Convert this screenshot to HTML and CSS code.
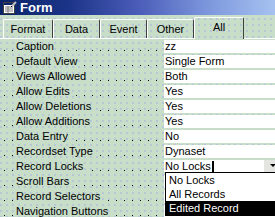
FILE: index.html
```html
<!DOCTYPE html>
<html lang="en">
<head>
    <meta charset="UTF-8">
    <title>Form Properties</title>
    <link rel="stylesheet" href="styles.css">
</head>
<body>
    <div class="titlebar">
        <svg class="app-icon" width="14" height="13" viewBox="0 0 14 13">
            <rect x="0.5" y="1.5" width="11" height="11" fill="#fff" stroke="#404040"/>
            <rect x="1" y="2" width="10" height="2" fill="#0a246a"/>
            <path d="M2 6h8M2 8h8M2 10h8M5 5v7" stroke="#808080" stroke-width="1"/>
            <path d="M9 5l4-4" stroke="#c0c0c0" stroke-width="2"/>
            <path d="M8 6l1-1" stroke="#000" stroke-width="1"/>
        </svg>
        <span class="title">Form</span>
    </div>
    <div class="tabs">
        <div class="tab tab-first">Format</div>
        <div class="tab">Data</div>
        <div class="tab">Event</div>
        <div class="tab">Other</div>
        <div class="tab tab-active">All</div>
    </div>
    <div class="props">
        <div class="prop"><div class="prop-name"><span>Caption</span></div><div class="prop-value">zz</div></div>
        <div class="prop"><div class="prop-name"><span>Default View</span></div><div class="prop-value">Single Form</div></div>
        <div class="prop"><div class="prop-name"><span>Views Allowed</span></div><div class="prop-value">Both</div></div>
        <div class="prop"><div class="prop-name"><span>Allow Edits</span></div><div class="prop-value">Yes</div></div>
        <div class="prop"><div class="prop-name"><span>Allow Deletions</span></div><div class="prop-value">Yes</div></div>
        <div class="prop"><div class="prop-name"><span>Allow Additions</span></div><div class="prop-value">Yes</div></div>
        <div class="prop"><div class="prop-name"><span>Data Entry</span></div><div class="prop-value">No</div></div>
        <div class="prop"><div class="prop-name"><span>Recordset Type</span></div><div class="prop-value">Dynaset</div></div>
        <div class="prop prop-open">
            <div class="prop-name"><span>Record Locks</span></div>
            <div class="prop-value prop-combo">No Locks<span class="caret"></span>
                <div class="drop-btn"><span class="drop-arrow"></span></div>
                <div class="drop-list">
                    <div class="drop-item">No Locks</div>
                    <div class="drop-item">All Records</div>
                    <div class="drop-item drop-selected">Edited Record</div>
                </div>
            </div>
        </div>
        <!-- values of these rows sit under the open list -->
        <div class="prop"><div class="prop-name"><span>Scroll Bars</span></div><div class="prop-value"></div></div>
        <div class="prop"><div class="prop-name"><span>Record Selectors</span></div><div class="prop-value"></div></div>
        <div class="prop"><div class="prop-name"><span>Navigation Buttons</span></div><div class="prop-value"></div></div>
    </div>
</body>
</html>
```

FILE: styles.css
```css
body {
    margin: 0;
    width: 275px;
    height: 217px;
    overflow: hidden;
    font-family: "Liberation Sans", Arial, sans-serif;
    font-size: 11px;
    color: #000;
    background-color: #c8dec8;
    background-image: radial-gradient(circle at 1px 1px, #b6c6d6 0.7px, transparent 0.9px);
    background-size: 6px 6px;
    background-attachment: fixed;
}
.titlebar {
    height: 15px;
    display: flex;
    align-items: center;
    padding-left: 3px;
    background: linear-gradient(90deg, #0a246a 0%, #1c3488 25%, #4a5cb8 50%, #7c96dc 75%, #a6c2f0 100%);
    color: #fff;
}
.app-icon {
    margin-right: 3px;
}
.title {
    font-weight: bold;
    font-size: 13px;
}
.tabs {
    display: flex;
    align-items: flex-end;
    height: 23px;
    padding-left: 3px;
    border-bottom: 1px solid #fff;
}
.tab {
    box-sizing: border-box;
    width: 47px;
    height: 19px;
    border-left: 1px solid #fff;
    border-top: 1px solid #fff;
    border-right: 1px solid #404040;
    border-radius: 2px 2px 0 0;
    text-align: center;
    line-height: 19px;
}
.tab-first {
    width: 50px;
}
.tab-active {
    width: 50px;
    height: 22px;
    margin-bottom: -1px;
    line-height: 19px;
    background-color: #c8dec8;
    background-image: radial-gradient(circle at 1px 1px, #b6c6d6 0.7px, transparent 0.9px);
    background-size: 6px 6px;
    background-attachment: fixed;
}
.props {
    padding-top: 1px;
}
.prop {
    display: grid;
    grid-template-columns: 164px 1fr;
    height: 15px;
}
.prop-name {
    height: 13px;
    padding-left: 16px;
    line-height: 13px;
    background-image: repeating-linear-gradient(90deg, #000 0 1px, transparent 1px 8px);
    background-size: 154px 1px;
    background-position: 4px 10px;
    background-repeat: no-repeat;
}
.prop-name span {
    display: inline-block;
    height: 13px;
    padding-right: 3px;
    background-color: #c8dec8;
    background-image: radial-gradient(circle at 1px 1px, #b6c6d6 0.7px, transparent 0.9px);
    background-size: 6px 6px;
    background-attachment: fixed;
}
.prop-value {
    height: 13px;
    line-height: 13px;
    padding-left: 1px;
    background: #fff;
    white-space: nowrap;
}
.prop-combo {
    position: relative;
    z-index: 1;
    height: 12px;
}
.caret {
    display: inline-block;
    width: 2px;
    height: 11px;
    margin-left: 1px;
    vertical-align: -2px;
    background: #000;
}
.drop-btn {
    position: absolute;
    left: 99px;
    top: 0;
    width: 16px;
    height: 12px;
    background: #e4e4e0;
    border-left: 1px solid #fff;
}
.drop-arrow {
    position: absolute;
    left: 6px;
    top: 4px;
    border-left: 3px solid transparent;
    border-right: 3px solid transparent;
    border-top: 3px solid #000;
}
.drop-list {
    position: absolute;
    left: 1px;
    top: 12px;
    width: 118px;
    background: #fff;
    border: 1px solid #000;
}
.drop-item {
    height: 14px;
    line-height: 14px;
    padding-left: 3px;
}
.drop-selected {
    background: #000;
    color: #fff;
}
```
